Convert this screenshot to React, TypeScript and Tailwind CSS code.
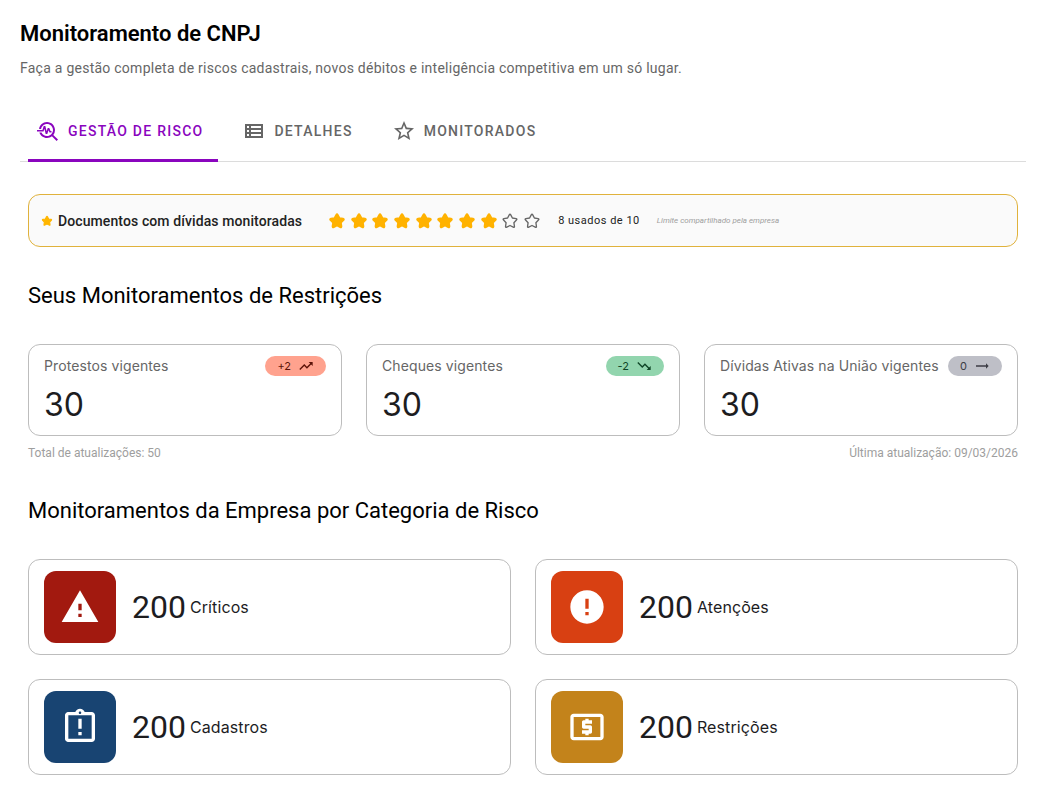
import { useState } from 'react'
import type { IconType } from 'react-icons'
import {
  MdError,
  MdOutlineAssignmentLate,
  MdOutlineLocalAtm,
  MdOutlineViewList,
  MdStarBorder,
  MdTrendingDown,
  MdTrendingFlat,
  MdTrendingUp,
  MdTroubleshoot,
  MdWarning,
} from 'react-icons/md'

const tabs = [
  { id: 'risco', label: 'Gestão de Risco', icon: MdTroubleshoot },
  { id: 'detalhes', label: 'Detalhes', icon: MdOutlineViewList },
  { id: 'monitorados', label: 'Monitorados', icon: MdStarBorder },
]

const restrictions = [
  { label: 'Protestos vigentes', value: 30, change: '+2', icon: MdTrendingUp, color: 'bg-[#ffa28e] text-[#5c1208]' },
  { label: 'Cheques vigentes', value: 30, change: '-2', icon: MdTrendingDown, color: 'bg-[#92d5ae] text-[#0f4527]' },
  { label: 'Dívidas Ativas na União vigentes', value: 30, change: '0', icon: MdTrendingFlat, color: 'bg-[#bebfc7] text-[#3c3d45]' },
]

const categories = [
  { label: 'Críticos', value: 200, icon: MdWarning, color: 'bg-[#a2190f]' },
  { label: 'Atenções', value: 200, icon: MdError, color: 'bg-[#d84012]' },
  { label: 'Cadastros', value: 200, icon: MdOutlineAssignmentLate, color: 'bg-[#184472]' },
  { label: 'Restrições', value: 200, icon: MdOutlineLocalAtm, color: 'bg-[#c3831b]' },
]

const USED = 8
const LIMIT = 10

function Star({ filled, className }: { filled: boolean; className: string }) {
  return (
    <svg
      viewBox="0 0 24 24"
      className={className}
      fill={filled ? 'currentColor' : 'none'}
      stroke="currentColor"
      strokeWidth={filled ? 2.4 : 1.8}
      strokeLinejoin="round"
    >
      <path d="M11 3.8Q12 2 13 3.8L15.2 8.05 20 8.9Q22 9.3 20.6 10.8L17.2 14.2 17.9 19Q18.2 21 16.3 20.1L12 18 7.7 20.1Q5.8 21 6.1 19L6.8 14.2 3.4 10.8Q2 9.3 4 8.9L8.8 8.05Z" />
    </svg>
  )
}

function RestrictionCard({ label, value, change, icon: Icon, color }: {
  label: string
  value: number
  change: string
  icon: IconType
  color: string
}) {
  return (
    <div className="rounded-xl border border-[#bdbdbd] px-[15px] pt-[11px] pb-[9px] font-['Inter',sans-serif]">
      <div className="flex items-center justify-between">
        <h3 className="whitespace-nowrap text-sm tracking-[0.1px] text-[#666666]">{label}</h3>
        <span className={`flex h-5 items-center gap-[7px] rounded-full px-3 text-[11px] ${color}`}>
          {change}
          <Icon className="size-4" />
        </span>
      </div>
      <p className="mt-2 text-[32px] leading-[42px] text-[#1d1d1f]">{value}</p>
    </div>
  )
}

export default function App() {
  const [activeTab, setActiveTab] = useState('risco')

  return (
    <main className="pt-5 pr-[15px] pb-6 pl-5 font-['Roboto',sans-serif]">
      <h1 className="text-[22px] leading-7 font-semibold text-black">Monitoramento de CNPJ</h1>
      <p className="mt-[10px] text-sm tracking-[0.25px] text-[#666666]">
        Faça a gestão completa de riscos cadastrais, novos débitos e inteligência competitiva em um só lugar.
      </p>

      <nav className="mt-6 flex gap-4 border-b border-[#dcdcdc] px-2">
        {tabs.map(({ id, label, icon: Icon }) => (
          <button
            key={id}
            type="button"
            onClick={() => setActiveTab(id)}
            className={`-mb-px flex h-[60px] items-center gap-2 border-b-[3px] pr-[15px] pl-2 text-sm font-medium tracking-[1.25px] uppercase ${
              activeTab === id ? 'border-[#8a05be] text-[#8a05be]' : 'border-transparent text-[#666666]'
            }`}
          >
            <Icon className="size-6" />
            {label}
          </button>
        ))}
      </nav>

      <div className="px-2 pt-8">
        <div className="flex h-[53px] items-center rounded-xl border border-[#e0b23c] bg-[#fafafa] px-3">
          <Star filled className="size-3 text-[#ffb600]" />
          <span className="ml-[5px] text-sm font-medium tracking-[0.1px] text-[#222222]">Documentos com dívidas monitoradas</span>
          <div className="ml-[26px] flex w-[213px] justify-between">
            {Array.from({ length: LIMIT }, (_, i) => (
              <Star key={i} filled={i < USED} className={i < USED ? 'size-[18px] text-[#ffb200]' : 'size-[18px] text-[#666666]'} />
            ))}
          </div>
          <span className="ml-[17px] text-[11px] leading-4 tracking-[0.5px] text-[#222222]">
            {USED} usados de {LIMIT}
          </span>
          <em className="ml-[17px] text-[8px] text-[#a0a0a0]">Limite compartilhado pela empresa</em>
        </div>

        <section className="mt-[33px]">
          <h2 className="text-[22px] leading-8 text-black">Seus Monitoramentos de Restrições</h2>
          <div className="mt-8 grid grid-cols-3 gap-6">
            {restrictions.map((item) => (
              <RestrictionCard key={item.label} {...item} />
            ))}
          </div>
          <div className="mt-[7px] flex justify-between text-xs leading-5 text-[#9e9e9e]">
            <span>Total de atualizações: 50</span>
            <span>Última atualização: 09/03/2026</span>
          </div>
        </section>

        <section className="mt-8">
          <h2 className="text-[22px] leading-8 text-black">Monitoramentos da Empresa por Categoria de Risco</h2>
          <div className="mt-8 grid grid-cols-2 gap-6">
            {categories.map(({ label, value, icon: Icon, color }) => (
              <div key={label} className="flex h-24 items-center rounded-xl border border-[#bdbdbd] px-[15px]">
                <div className={`flex size-[72px] items-center justify-center rounded-xl text-white ${color}`}>
                  <Icon className="size-10" />
                </div>
                <span className="ml-4 text-[32px] text-[#1d1d1f]">{value}</span>
                <span className="ml-1 font-['Inter',sans-serif] text-base tracking-[0.1px] text-[#1d1d1f]">{label}</span>
              </div>
            ))}
          </div>
        </section>
      </div>
    </main>
  )
}
